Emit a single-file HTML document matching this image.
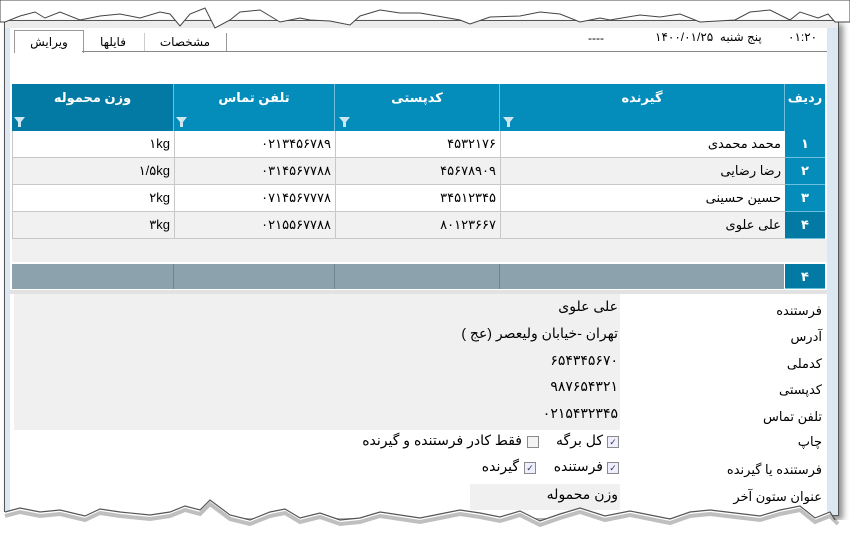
<!DOCTYPE html>
<html><head><meta charset="utf-8"><style>
body{margin:0;width:850px;height:551px;background:#fff;position:relative;overflow:hidden;font-family:"Liberation Sans","DejaVu Sans",sans-serif;font-size:13px;color:#000}
.a{position:absolute}
.win{left:4px;top:20px;width:833px;height:494px;background:#dbe7f3;border:1px solid #555;box-shadow:4px 4px 6px rgba(0,0,0,.45)}
.cont{left:10px;top:28px;width:817px;height:490px;background:#fff}
.hd{background:#048dbb;color:#fff;font-weight:bold;border-right:1px solid #6cc0dd}
.c{border-bottom:1px solid #c8c8c8;border-left:1px solid #c8c8c8;box-sizing:border-box;text-align:right;padding-right:4px;line-height:26px;direction:rtl}
.rn{background:#048dbb;color:#fff;text-align:center;line-height:26px;font-weight:bold;border-bottom:1px solid #6cc0dd;box-sizing:border-box}
.lb{right:28px;direction:rtl;text-align:right;font-size:13px}
.v{direction:rtl;font-size:14px}
.cb{width:10px;height:10px;border:1px solid #8a8a8a;background:#eef;font-size:9px;line-height:10px;text-align:center;color:#335}
</style></head><body>
<div class="a win"></div>
<div class="a" style="left:5px;top:21px;width:833px;height:7px;background:#ececec"></div>
<div class="a cont"></div>
<!-- top bar -->
<div class="a" style="left:14px;top:30px;width:68px;height:22px;border:1px solid #999;border-bottom:none;background:#fff;text-align:center;line-height:22px;font-size:12px">ویرایش</div>
<div class="a" style="left:82px;top:33px;width:62px;height:18px;border-right:1px solid #ccc;text-align:center;line-height:18px;font-size:12px">فایلها</div>
<div class="a" style="left:144px;top:33px;width:82px;height:18px;border-right:1px solid #999;text-align:center;line-height:18px;font-size:12px">مشخصات</div>
<div class="a" style="left:82px;top:51px;width:745px;height:1px;background:#888"></div>
<div class="a" style="left:588px;top:31px;font-size:12px">----</div>
<div class="a" style="left:655px;top:30px;font-size:12px;direction:rtl">پنج شنبه&nbsp; ۱۴۰۰/۰۱/۲۵</div>
<div class="a" style="left:788px;top:30px;font-size:12px">۰۱:۲۰</div>
<!-- header -->
<div class="a hd" style="left:12px;top:84px;width:161px;height:47px;background:#037aa3"><div style="text-align:center;margin-top:6px">وزن محموله</div></div>
<div class="a hd" style="left:174px;top:84px;width:160px;height:47px"><div style="text-align:center;margin-top:6px">تلفن تماس</div></div>
<div class="a hd" style="left:335px;top:84px;width:164px;height:47px"><div style="text-align:center;margin-top:6px">کدپستی</div></div>
<div class="a hd" style="left:500px;top:84px;width:284px;height:47px"><div style="text-align:center;margin-top:6px">گیرنده</div></div>
<div class="a hd" style="left:785px;top:84px;width:40px;height:47px;border:none"><div style="text-align:center;margin-top:6px">ردیف</div></div>
<svg class="a" style="left:0;top:115px" width="520" height="14">
<g fill="#cfe6ef"><path d="M14,2 h11 l-4,5 v5 h-3 v-5 z"/><path d="M176,2 h11 l-4,5 v5 h-3 v-5 z"/><path d="M339,2 h11 l-4,5 v5 h-3 v-5 z"/><path d="M503,2 h11 l-4,5 v5 h-3 v-5 z"/></g></svg>
<!-- rows -->
<div class="a" style="left:12px;top:131px;width:773px">
<div style="display:flex;height:27px;background:#fff"><div class="c" style="width:162px">۱kg</div><div class="c" style="width:161px">۰۲۱۳۴۵۶۷۸۹</div><div class="c" style="width:165px">۴۵۳۲۱۷۶</div><div class="c" style="width:285px">محمد محمدی</div></div>
<div style="display:flex;height:27px;background:#f1f1f1"><div class="c" style="width:162px">۱/۵kg</div><div class="c" style="width:161px">۰۳۱۴۵۶۷۷۸۸</div><div class="c" style="width:165px">۴۵۶۷۸۹۰۹</div><div class="c" style="width:285px">رضا رضایی</div></div>
<div style="display:flex;height:27px;background:#fff"><div class="c" style="width:162px">۲kg</div><div class="c" style="width:161px">۰۷۱۴۵۶۷۷۷۸</div><div class="c" style="width:165px">۳۴۵۱۲۳۴۵</div><div class="c" style="width:285px">حسین حسینی</div></div>
<div style="display:flex;height:27px;background:#f1f1f1"><div class="c" style="width:162px">۳kg</div><div class="c" style="width:161px">۰۲۱۵۵۶۷۷۸۸</div><div class="c" style="width:165px">۸۰۱۲۳۶۶۷</div><div class="c" style="width:285px">علی علوی</div></div>
</div>
<div class="a rn" style="left:785px;top:131px;width:40px;height:27px">۱</div>
<div class="a rn" style="left:785px;top:158px;width:40px;height:27px">۲</div>
<div class="a rn" style="left:785px;top:185px;width:40px;height:27px">۳</div>
<div class="a rn" style="left:785px;top:212px;width:40px;height:27px;background:#037aa3">۴</div>
<div class="a" style="left:12px;top:239px;width:815px;height:23px;background:#f0f0f0"></div>
<!-- footer -->
<div class="a" style="left:12px;top:264px;width:772px;height:25px;background:#8ca3ae"></div>
<div class="a" style="left:173px;top:264px;width:1px;height:25px;background:#6f8690"></div>
<div class="a" style="left:334px;top:264px;width:1px;height:25px;background:#6f8690"></div>
<div class="a" style="left:499px;top:264px;width:1px;height:25px;background:#6f8690"></div>
<div class="a rn" style="left:785px;top:264px;width:40px;height:25px;background:#037aa3;line-height:25px">۴</div>
<div class="a" style="left:10px;top:290px;width:817px;height:4px;background:#e2e2e2"></div>
<!-- form -->
<div class="a" style="left:14px;top:294px;width:606px;height:136px;background:#f0f0f0"></div>
<div class="a" style="left:470px;top:484px;width:150px;height:26px;background:#f0f0f0"></div>
<div class="a lb" style="top:303px">فرستنده</div>
<div class="a lb" style="top:329px">آدرس</div>
<div class="a lb" style="top:356px">کدملی</div>
<div class="a lb" style="top:382px">کدپستی</div>
<div class="a lb" style="top:409px">تلفن تماس</div>
<div class="a lb" style="top:434px">چاپ</div>
<div class="a lb" style="top:462px">فرستنده یا گیرنده</div>
<div class="a lb" style="top:489px">عنوان ستون آخر</div>
<div class="a v" style="right:232px;top:298px">علی علوی</div>
<div class="a v" style="right:232px;top:325px">تهران -خیابان ولیعصر (عج )</div>
<div class="a v" style="right:232px;top:352px">۶۵۴۳۴۵۶۷۰</div>
<div class="a v" style="right:232px;top:378px">۹۸۷۶۵۴۳۲۱</div>
<div class="a v" style="right:232px;top:405px">۰۲۱۵۴۳۲۳۴۵</div>
<div class="a cb" style="left:607px;top:436px">✓</div><div class="a v" style="right:247px;top:432px">کل برگه</div>
<div class="a cb" style="left:527px;top:436px;background:#f4f4f4"></div><div class="a v" style="right:328px;top:432px">فقط کادر فرستنده و گیرنده</div>
<div class="a cb" style="left:607px;top:462px">✓</div><div class="a v" style="right:247px;top:458px">فرستنده</div>
<div class="a cb" style="left:524px;top:462px">✓</div><div class="a v" style="right:331px;top:458px">گیرنده</div>
<div class="a v" style="right:232px;top:486px">وزن محموله</div>
<!-- torn edges -->
<svg class="a" style="left:0;top:0" width="850" height="551">
<polygon fill="#fff" stroke="#444" stroke-width="1" points="0,0 850,0 850,22 835,22 828,14 818,18 800,12 790,20 770,10 750,12 735,20 700,22 680,14 660,17 640,15 610,20 600,18 580,22 560,14 540,12 520,16 490,17 470,24 460,20 420,13 400,13 380,10 360,16 350,25 330,21 310,20 300,18 280,22 260,10 240,12 230,20 215,28 205,8 190,14 180,26 170,14 160,12 140,18 120,14 100,16 80,20 60,12 45,18 35,12 20,16 5,22 0,22"/>
<polygon fill="#fff" points="0,551 850,551 850,520 835,520 830,512 815,518 800,506 780,510 760,516 735,513 710,510 690,512 670,519 650,515 630,511 605,516 580,508 560,514 540,521 520,511 500,517 480,513 460,510 440,514 420,518 400,515 380,512 360,518 340,520 320,513 300,518 285,509 270,512 250,520 230,515 210,500 200,510 185,506 170,512 150,515 120,512 100,509 85,516 60,510 40,512 20,508 5,512 0,512"/>
<polyline fill="none" stroke="rgba(0,0,0,.25)" stroke-width="4" points="838,524 830,516 815,522 800,510 780,514 760,520 735,517 710,514 690,516 670,523 650,519 630,515 605,520 580,512 560,518 540,525 520,515 500,521 480,517 460,514 440,518 420,522 400,519 380,516 360,522 340,524 320,517 300,522 285,513 270,516 250,524 230,519 210,504 200,514 185,510 170,516 150,519 120,516 100,513 85,520 60,514 40,516 20,512 5,516"/>
<polyline fill="none" stroke="#555" stroke-width="1.2" points="835,520 830,512 815,518 800,506 780,510 760,516 735,513 710,510 690,512 670,519 650,515 630,511 605,516 580,508 560,514 540,521 520,511 500,517 480,513 460,510 440,514 420,518 400,515 380,512 360,518 340,520 320,513 300,518 285,509 270,512 250,520 230,515 210,500 200,510 185,506 170,512 150,515 120,512 100,509 85,516 60,510 40,512 20,508 5,512"/>
</svg>
</body></html>
